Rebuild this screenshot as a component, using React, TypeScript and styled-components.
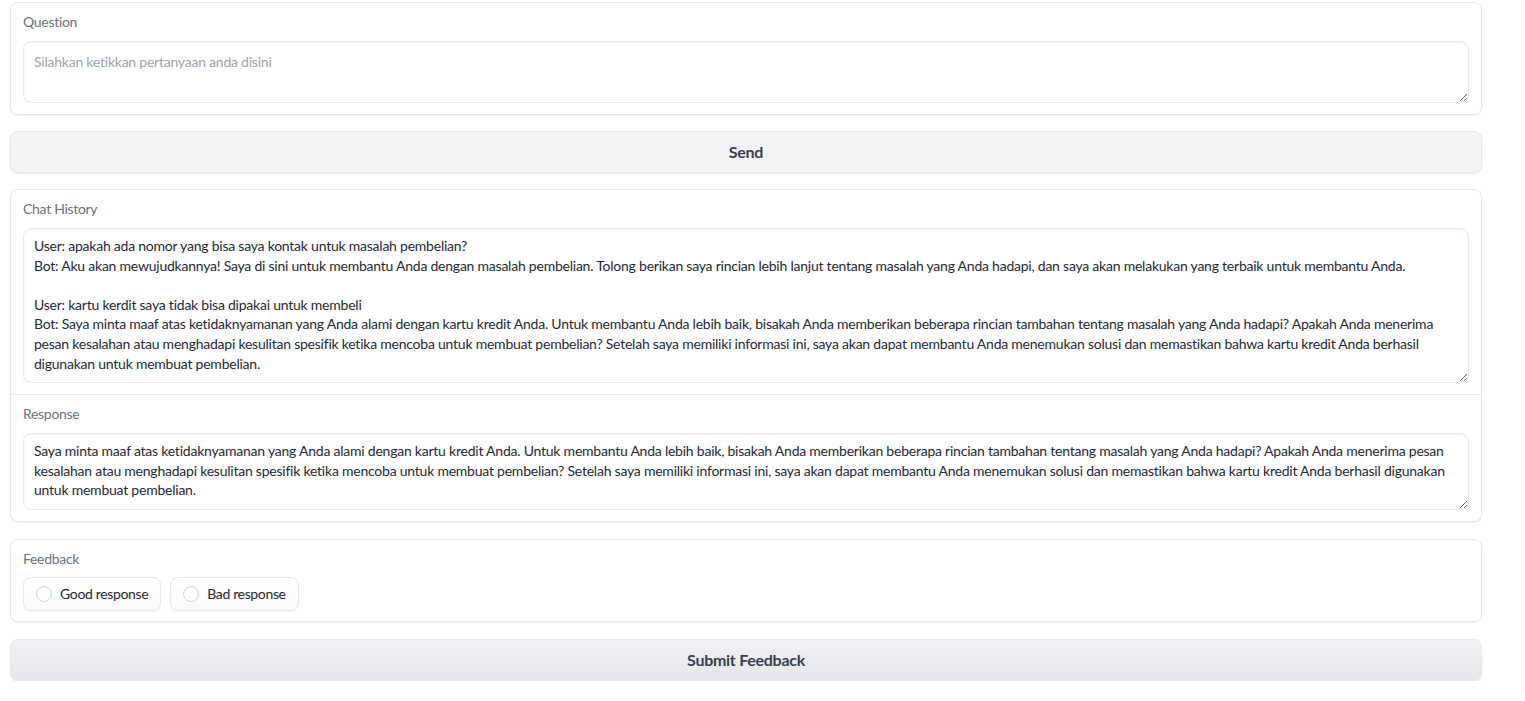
import React from "react";
import styled, { createGlobalStyle } from "styled-components";

const FONT = `"Lato", "Noto Sans", sans-serif`;

const GlobalStyle = createGlobalStyle`
  html, body { margin: 0; padding: 0; background: #ffffff; }
  body { font-family: ${FONT}; }
  * { box-sizing: border-box; }
`;

const Page = styled.main`
  width: 1472px;
  margin: 2px 0 0 10px;
  display: flex;
  flex-direction: column;
  gap: 16px;
`;

const Block = styled.section<{ $my?: number }>`
  margin: ${(p) => p.$my ?? 0}px 0;
  background: #ffffff;
  border: 1px solid #e5e7eb;
  border-radius: 8px;
  box-shadow: 0 1px 2px rgba(0, 0, 0, 0.05);
  overflow: hidden;
`;

const Group = styled(Block)`
  display: flex;
  flex-direction: column;
  gap: 1px;
  background: #e5e7eb;
`;

const Field = styled.div<{ $pb?: number }>`
  display: flex;
  flex-direction: column;
  padding: 10px 12px ${(p) => p.$pb ?? 11}px;
  background: #ffffff;
`;

const Label = styled.label<{ $mb?: number }>`
  display: block;
  height: 20px;
  line-height: 18px;
  margin-bottom: ${(p) => p.$mb ?? 8}px;
  font-size: 14px;
  letter-spacing: -0.3px;
  color: #6b7280;
`;

const TextArea = styled.textarea<{ $h: number; $pt: number }>`
  display: block;
  width: 100%;
  height: ${(p) => p.$h}px;
  padding: ${(p) => p.$pt}px 10px 0 10px;
  border: 1px solid #e5e7eb;
  border-radius: 8px;
  background: #ffffff;
  box-shadow: inset 0 1px 3px rgba(0, 0, 0, 0.05);
  font-family: ${FONT};
  font-size: 14px;
  letter-spacing: -0.23px;
  line-height: 19.6px;
  color: #1f2937;
  resize: vertical;
  white-space: pre-wrap;
  overflow: hidden;
  outline: none;
  &::placeholder {
    color: #9ca3af;
  }
`;

const Button = styled.button<{ $shade?: boolean }>`
  display: block;
  width: 100%;
  height: 42px;
  padding: 0 0 2px;
  border: 1px solid #e5e7eb;
  border-radius: 8px;
  background: ${(p) =>
    p.$shade ? "linear-gradient(to bottom, #f0f1f3, #e7e8eb)" : "#f3f4f6"};
  box-shadow: 0 1px 2px rgba(0, 0, 0, 0.08);
  font-family: ${FONT};
  font-size: 16px;
  font-weight: 700;
  letter-spacing: -0.27px;
  color: #374151;
  cursor: pointer;
`;

const Options = styled.div`
  display: flex;
  gap: 9px;
`;

const Pill = styled.label`
  display: flex;
  align-items: center;
  gap: 8px;
  height: 34px;
  padding: 0 12px 1px;
  border: 1px solid #e5e7eb;
  border-radius: 8px;
  background: linear-gradient(to bottom, #ffffff, #f9fafb);
  box-shadow: 0 1px 2px rgba(0, 0, 0, 0.05);
  font-size: 14px;
  letter-spacing: -0.35px;
  color: #1f2937;
  cursor: pointer;
`;

const Radio = styled.input.attrs({ type: "radio", name: "feedback" })`
  appearance: none;
  margin: 0;
  width: 16px;
  height: 16px;
  border-radius: 50%;
  border: 1px solid #d1d5db;
  background: #ffffff;
  box-shadow: inset 0 1px 2px rgba(0, 0, 0, 0.05);
`;

const history = [
  "User: apakah ada nomor yang bisa saya kontak untuk masalah pembelian?",
  "Bot: Aku akan mewujudkannya! Saya di sini untuk membantu Anda dengan masalah pembelian. Tolong berikan saya rincian lebih lanjut tentang masalah yang Anda hadapi, dan saya akan melakukan yang terbaik untuk membantu Anda.",
  "",
  "User: kartu kerdit saya tidak bisa dipakai untuk membeli",
  "Bot: Saya minta maaf atas ketidaknyamanan yang Anda alami dengan kartu kredit Anda. Untuk membantu Anda lebih baik, bisakah Anda memberikan beberapa rincian tambahan tentang masalah yang Anda hadapi? Apakah Anda menerima",
  "pesan kesalahan atau menghadapi kesulitan spesifik ketika mencoba untuk membuat pembelian? Setelah saya memiliki informasi ini, saya akan dapat membantu Anda menemukan solusi dan memastikan bahwa kartu kredit Anda berhasil",
  "digunakan untuk membuat pembelian.",
].join("\n");

const response = [
  "Saya minta maaf atas ketidaknyamanan yang Anda alami dengan kartu kredit Anda. Untuk membantu Anda lebih baik, bisakah Anda memberikan beberapa rincian tambahan tentang masalah yang Anda hadapi? Apakah Anda menerima pesan",
  "kesalahan atau menghadapi kesulitan spesifik ketika mencoba untuk membuat pembelian? Setelah saya memiliki informasi ini, saya akan dapat membantu Anda menemukan solusi dan memastikan bahwa kartu kredit Anda berhasil digunakan",
  "untuk membuat pembelian.",
].join("\n");

export default function App() {
  return (
    <>
      <GlobalStyle />
      <Page>
        <Block>
          <Field>
            <Label htmlFor="q">Question</Label>
            <TextArea
              id="q"
              $h={62}
              $pt={10}
              placeholder="Silahkan ketikkan pertanyaan anda disini"
            />
          </Field>
        </Block>
        <Button>Send</Button>
        <Group>
          <Field>
            <Label htmlFor="h">Chat History</Label>
            <TextArea id="h" $h={155} $pt={7} defaultValue={history} readOnly />
          </Field>
          <Field>
            <Label htmlFor="r">Response</Label>
            <TextArea id="r" $h={77} $pt={7} defaultValue={response} readOnly />
          </Field>
        </Group>
        <Block $my={1}>
          <Field $pb={10}>
            <Label $mb={7}>Feedback</Label>
            <Options>
              <Pill>
                <Radio value="good" />
                Good response
              </Pill>
              <Pill>
                <Radio value="bad" />
                Bad response
              </Pill>
            </Options>
          </Field>
        </Block>
        <Button $shade>Submit Feedback</Button>
      </Page>
    </>
  );
}
